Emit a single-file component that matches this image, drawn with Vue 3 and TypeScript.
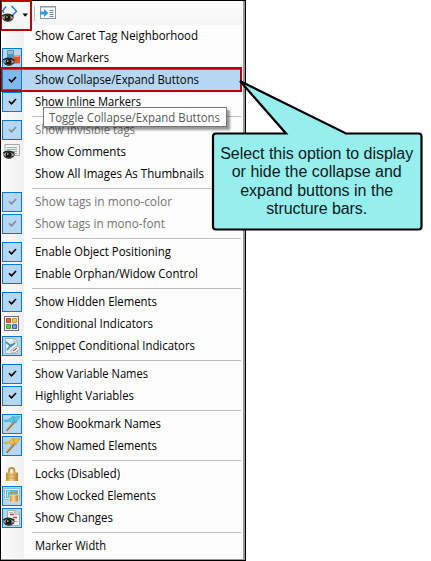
<script setup lang="ts">
type Icon = 'check' | 'markers' | 'comments' | 'conditions' | 'snippet' | 'bookmark' | 'named' | 'lock' | 'locked' | 'changes'
interface Item { label: string; width: number; icon?: Icon; boxed?: boolean; disabled?: boolean; active?: boolean }

const groups: Item[][] = [
  [
    { label: 'Show Caret Tag Neighborhood', width: 163 },
    { label: 'Show Markers', width: 74, icon: 'markers', boxed: true },
    { label: 'Show Collapse/Expand Buttons', width: 164, icon: 'check', boxed: true, active: true },
    { label: 'Show Inline Markers', width: 106, icon: 'check', boxed: true },
  ],
  [
    { label: 'Show Invisible tags', width: 100, icon: 'check', boxed: true, disabled: true },
    { label: 'Show Comments', width: 91, icon: 'comments' },
    { label: 'Show All Images As Thumbnails', width: 169 },
  ],
  [
    { label: 'Show tags in mono-color', width: 137, icon: 'check', boxed: true, disabled: true },
    { label: 'Show tags in mono-font', width: 130, icon: 'check', boxed: true, disabled: true },
  ],
  [
    { label: 'Enable Object Positioning', width: 136, icon: 'check', boxed: true },
    { label: 'Enable Orphan/Widow Control', width: 163, icon: 'check', boxed: true },
  ],
  [
    { label: 'Show Hidden Elements', width: 122, icon: 'check', boxed: true },
    { label: 'Conditional Indicators', width: 118, icon: 'conditions' },
    { label: 'Snippet Conditional Indicators', width: 160, icon: 'snippet', boxed: true },
  ],
  [
    { label: 'Show Variable Names', width: 113, icon: 'check', boxed: true },
    { label: 'Highlight Variables', width: 99, icon: 'check', boxed: true },
  ],
  [
    { label: 'Show Bookmark Names', width: 126, icon: 'bookmark', boxed: true },
    { label: 'Show Named Elements', width: 122, icon: 'named', boxed: true },
  ],
  [
    { label: 'Locks (Disabled)', width: 85, icon: 'lock' },
    { label: 'Show Locked Elements', width: 121, icon: 'locked', boxed: true },
    { label: 'Show Changes', width: 78, icon: 'changes', boxed: true },
  ],
  [{ label: 'Marker Width', width: 71 }],
]
const calloutLines = [
  { text: 'Select this option to display', width: 193 },
  { text: 'or hide the collapse and', width: 170 },
  { text: 'expand buttons in the', width: 153 },
  { text: 'structure bars.', width: 101 },
]
</script>

<template>
  <main class="screen">
    <svg class="defs" width="0" height="0">
      <defs>
        <symbol id="eye" viewBox="0 0 12 9">
          <path d="M0 4.5Q5-.8 11.5 4.2Q10 8.5 5.5 8.5Q2 8 0 4.5Z" fill="#aaa79d" stroke="#39352f" stroke-width=".7" />
          <path d="M.2 3Q5-1 11.5 3.4" fill="none" stroke="#201d18" stroke-width="1.4" />
          <circle cx="5.6" cy="4.9" r="3" fill="#181713" /><circle cx="4.8" cy="4.1" r=".8" fill="#ddd" />
          <path d="M1 6.2Q5 9.6 10.8 6" fill="none" stroke="#38342e" stroke-width="1.2" />
        </symbol>
        <linearGradient id="gold" x2="1"><stop stop-color="#c68d32" /><stop offset=".45" stop-color="#f4d790" /><stop offset="1" stop-color="#b77a23" /></linearGradient>
      </defs>
    </svg>

    <section class="window">
      <header class="toolbar">
        <button class="view-button">
          <svg width="28" height="26" viewBox="0 0 28 26">
            <path d="M4 3.5L.5 8l1.5 2M9.5 3l5 5.2-5 5.3" fill="none" stroke="#287bd0" stroke-width="1.5" />
            <use href="#eye" x="0" y="10" width="12" height="9" />
            <path d="M20.5 10.5h5.5l-2.75 3.3Z" fill="#000" />
          </svg>
        </button>
        <i class="toolbar-divider"></i>
        <svg class="pane-icon" width="16" height="14" viewBox="0 0 16 14">
          <rect x=".5" y=".5" width="15" height="12" fill="#fafcfe" stroke="#8794a1" /><path d="M1 1.5h14" stroke="#c4ced7" />
          <path d="M9.5 4.5h4M9.5 6.5h4M9.5 8.5h4M9.5 10.5h4" stroke="#718397" />
          <path d="M0 5.5h4V3L8.5 7 4 11V8.5H0Z" fill="#3997e1" />
        </svg>
      </header>
      <nav class="menu">
        <div v-for="(group, gi) in groups" :key="gi" class="group">
          <div v-for="item in group" :key="item.label" :class="['row', { active: item.active, disabled: item.disabled }]">
            <span :class="['icon-box', { boxed: item.boxed }]">
              <svg v-if="item.icon" width="18" height="18" viewBox="0 0 18 18">
                <path v-if="item.icon === 'check'" class="tick" d="M6 8.3l2.5 2.5 4.5-4.8" />
                <template v-else-if="item.icon === 'markers'">
                  <rect x="4" y="1" width="7" height="10" rx="1" fill="#5796b7" /><path d="M5 2h5v3H5Z" fill="#94bfd3" />
                  <rect x="10.5" y="6" width="6.5" height="8.5" rx="1" fill="#df5430" /><path d="M11 6h5v2h-5Z" fill="#f09a79" />
                  <use href="#eye" x="0" y="8" width="12" height="9" />
                </template>
                <template v-else-if="item.icon === 'comments'">
                  <path d="M2 1.5h14.5v11H2Z" fill="#f1f4f2" stroke="#a2aaa7" /><path d="M4 4.5h10M4 6.5h10M8 8.5h6M12 10.5h2" stroke="#92b0a6" />
                  <use href="#eye" x="0" y="7" width="12" height="9" />
                </template>
                <template v-else-if="item.icon === 'conditions'">
                  <rect x="1.5" y="1.5" width="14" height="14" fill="#f7f7f6" stroke="#6c6c88" />
                  <path d="M3.5 3.5h4v4h-4Z" fill="#e76549" stroke="#ce4028" /><path d="M9.5 3.5h4v4h-4Z" fill="#ecca49" stroke="#d19824" />
                  <path d="M3.5 9.5h4v4h-4Z" fill="#70c15b" stroke="#479b3f" /><path d="M9.5 9.5h4v4h-4Z" fill="#619ee4" stroke="#3866b7" />
                </template>
                <template v-else-if="item.icon === 'snippet'">
                  <path d="M2.5 1.5h9l3 3v12h-12Z" fill="#e5eff0" stroke="#9db3b8" /><path d="M11 2v3h3" fill="#f7f7f7" stroke="#a6b8bb" />
                  <path d="M3 5l5 4 4-3M4 13l5-6" fill="none" stroke="#4d91aa" stroke-width="1.8" />
                  <path d="M8 13l6-4 3 2-5 5-4-1Z" fill="#fff" stroke="#9ca6ab" stroke-width=".8" /><path d="M10 14l4-3" stroke="#db4131" stroke-width="1.3" />
                </template>
                <template v-else-if="item.icon === 'bookmark' || item.icon === 'named'">
                  <path d="M3.5 15.5L13 5" stroke="#93672f" stroke-width="2" /><path d="M3.5 14.5l8-8.5" stroke="#edc294" />
                  <path d="M1 5.5L6 4.5 10 1l1.5 1L17 1.5 14 6l-1 2-2-1-3 .5L7 6 2 7Z" :fill="item.icon === 'bookmark' ? '#5bc9e2' : '#edc04b'" :stroke="item.icon === 'bookmark' ? '#31a1bd' : '#c6942d'" stroke-width=".6" />
                  <path d="M10 2l2 5" :stroke="item.icon === 'bookmark' ? '#239ab9' : '#bc8929'" stroke-width=".8" />
                </template>
                <template v-else-if="item.icon === 'lock'">
                  <path d="M6 8V5.5Q6 3 8.7 3t2.7 2.5V8" fill="none" stroke="#bb913f" stroke-width="1.8" /><rect x="3" y="7.5" width="12" height="8.5" rx=".5" fill="url(#gold)" />
                  <path d="M3 10h12M3 13h12" stroke="#b88432" stroke-width=".7" />
                </template>
                <template v-else-if="item.icon === 'locked'">
                  <path d="M1.5 1.5h15v11h-15Z" fill="#dff5fb" stroke="#8dbccd" /><path d="M3 3h12v8H3Z" fill="#51bce1" /><path d="M4.5 4v6M4 4.5h3" stroke="#bceaf7" />
                  <path d="M8 9V7q0-2 2.8-2t2.8 2v2" fill="none" stroke="#c89548" stroke-width="1.6" /><rect x="6.5" y="8" width="9" height="7" fill="url(#gold)" stroke="#f3dfb6" stroke-width=".7" />
                </template>
                <template v-else>
                  <path d="M4.5 1.5h8l4 3v12h-12Z" fill="#f4f7f8" stroke="#9baeb6" /><path d="M12 1v4h4" fill="#dce7eb" stroke="#91a6b0" />
                  <path d="M7 5.5h4M10 8.5h4" stroke="#df3f37" stroke-width="1.3" /><path d="M6 3.5h4M12 12.5h3" stroke="#a9b6bc" />
                  <use href="#eye" x="0" y="8" width="12" height="9" />
                </template>
              </svg>
            </span>
            <svg class="label" :width="item.width + 2" height="20"><text x="0" y="14" :textLength="item.width" lengthAdjust="spacingAndGlyphs">{{ item.label }}</text></svg>
          </div>
        </div>
      </nav>
    </section>

    <div class="tooltip"><svg width="173" height="18"><text x="0" y="13.5" textLength="171" lengthAdjust="spacingAndGlyphs">Toggle Collapse/Expand Buttons</text></svg></div>
    <aside class="callout">
      <svg class="bubble" width="213" height="153" viewBox="211 79 213 153">
        <path d="M240 81L346 133.5H418.5Q421.5 133.5 421.5 136.5V226.5Q421.5 229.5 418.5 229.5H216Q213 229.5 213 226.5V136.5Q213 133.5 216 133.5H286Z" fill="#97efed" stroke="#000" stroke-width="2.2" stroke-linejoin="miter" />
        <text v-for="(line, i) in calloutLines" :key="i" x="316.7" :y="159 + i * 18.4" text-anchor="middle" :textLength="line.width">{{ line.text }}</text>
      </svg>
    </aside>
  </main>
</template>

<style>
body { background: #fff; }
</style>
<style scoped>
* { box-sizing: border-box; }
.screen { position: relative; width: 431px; height: 561px; overflow: hidden; background: #fff; font-family: "Open Sans", "Noto Sans", sans-serif; }
.defs { position: absolute; }
.window { width: 246px; height: 561px; padding-bottom: 2px; border: 1px solid #000; background: #fdfdfd; box-shadow: inset -2px -1px #999; }
.toolbar { display: flex; height: 24px; background: linear-gradient(#fdfdfd, #f4f4f4); margin-right: 2px; }
.view-button { flex: none; width: 31px; height: 31px; padding: 0; margin-top: -1px; border: 2px solid #c00000; border-left-width: 1px; background: transparent; z-index: 1; }
.view-button svg { display: block; }
.toolbar-divider { width: 1px; height: 15px; margin: 5px 5px 0 2px; background: #bdbdbd; }
.pane-icon { margin-top: 5px; }
.menu { margin-right: 2px; height: 533px; background: linear-gradient(90deg, #fafafa, #f0f0f0) 0 0 / 23px 100% no-repeat, #fdfdfd; }
.group + .group::before { content: ""; display: block; height: 6px; margin-left: 31px; margin-right: 2px; background: linear-gradient(#bdbdbd, #bdbdbd) 0 3px / 100% 1px no-repeat; }
.row { display: flex; align-items: center; height: 22px; }
.icon-box { display: grid; place-items: center; width: 20px; height: 20px; margin-left: 1px; border: 1px solid transparent; flex: none; }
.boxed { border-color: #0078d7; background: #b5d7f3; }
.tick { fill: none; stroke: #000; stroke-width: 1.6; }
.label { display: block; margin-left: 13px; overflow: visible; font-size: 12px; fill: #000; }
.disabled .label { fill: #747474; }
.disabled .tick { stroke: #808890; }
.active { height: 25px; margin: -2px 1px -1px 0; border: 2px solid #c00000; background: #b5d7f3; box-shadow: inset 0 1px #0078d7; position: relative; }
.active .icon-box { height: 21px; margin-left: -1px; background: #80b9ea; }
.tooltip { position: absolute; left: 43px; top: 107px; width: 184px; height: 20px; padding-left: 5px; border: 1px solid #767676; background: #fff; box-shadow: 3px 3px 2px rgba(0, 0, 0, .4); }
.tooltip svg { display: block; font-size: 12px; fill: #575757; overflow: visible; }
.callout { position: absolute; left: 211px; top: 79px; font-family: "Liberation Sans", Arial, sans-serif; font-size: 16px; }
.bubble { display: block; fill: #08191d; }
</style>
